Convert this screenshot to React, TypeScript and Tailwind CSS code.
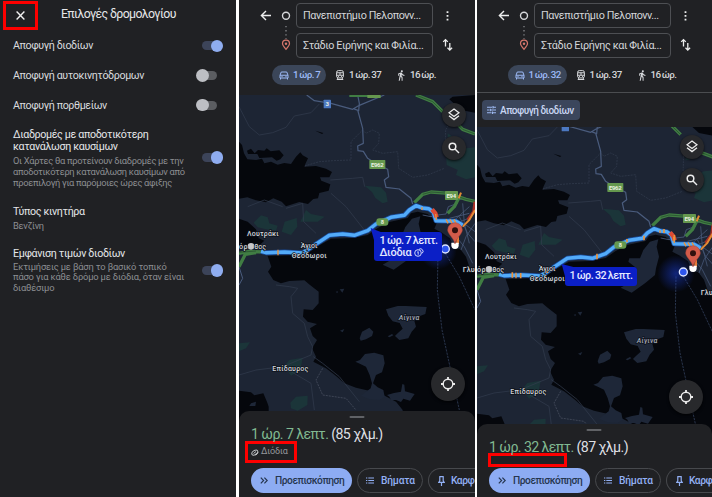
import type { ReactNode } from 'react';
import clsx from 'clsx';

const Toggle = ({ on = false }: { on?: boolean }) => (
  <div
    className={clsx(
      'flex h-[9px] w-[20px] shrink-0 items-center rounded-full',
      on ? 'mr-[14px] justify-end bg-[#3c4459]' : 'mr-[19px] justify-start bg-[#5b5d61]',
    )}
  >
    <div className={clsx('h-[12.5px] w-[12.5px] shrink-0 rounded-full', on ? '-mr-px bg-[#8fadf0]' : '-ml-px bg-[#bdbfc4]')} />
  </div>
);

const OptionRow = ({ title, on }: { title: string; on: boolean }) => (
  <div className="flex h-[29.7px] items-center justify-between pl-[13px]">
    <span className="pt-px text-[10.7px] tracking-[-0.4px] text-[#d9dbde]">{title}</span>
    <Toggle on={on} />
  </div>
);

const Lines = ({ lines }: { lines: string[] }) => (
  <>
    {lines.map((line) => (
      <span key={line} className="block whitespace-nowrap">
        {line}
      </span>
    ))}
  </>
);

const OptionsPanel = () => (
  <section className="h-full w-[236px] shrink-0 overflow-hidden bg-[#202124]">
    <div className="flex h-[31px] items-start">
      <div className="ml-[3px] mt-px flex h-[29px] w-[35px] items-center justify-center border-3 border-[#fe0000]">
        <svg className="h-[9px] w-[9px]" viewBox="0 0 9 9" stroke="#f1f1f1" strokeWidth="1.4">
          <path d="M.6.6 8.4 8.4M8.4.6.6 8.4" />
        </svg>
      </div>
      <h1 className="ml-[23px] mt-[5px] whitespace-nowrap text-[12.3px] leading-[18px] tracking-[-0.62px] text-[#e6e7e9]">Επιλογές δρομολογίου</h1>
    </div>

    <OptionRow title="Αποφυγή διοδίων" on />
    <OptionRow title="Αποφυγή αυτοκινητόδρομων" on={false} />
    <OptionRow title="Αποφυγή πορθμείων" on={false} />

    <div className="mt-[7.5px] flex h-[60px] items-center justify-between pl-[13px]">
      <div className="pt-[2px]">
        <h2 className="text-[10.7px] leading-[12.3px] tracking-[-0.36px] text-[#e4e6e9]">
          <Lines lines={['Διαδρομές με αποδοτικότερη', 'κατανάλωση καυσίμων']} />
        </h2>
        <p className="mt-[2.5px] text-[9.3px] leading-[10.8px] tracking-[-0.3px] text-[#8c8e92]">
          <Lines lines={['Οι Χάρτες θα προτείνουν διαδρομές με την', 'αποδοτικότερη κατανάλωση καυσίμων από', 'προεπιλογή για παρόμοιες ώρες άφιξης']} />
        </p>
      </div>
      <Toggle on />
    </div>

    <div className="mt-[17px] pl-[13px]">
      <h2 className="text-[10.7px] leading-[13px] tracking-[-0.36px] text-[#e4e6e9]">Τύπος κινητήρα</h2>
      <p className="mt-[2px] text-[9.3px] leading-[11px] tracking-[-0.3px] text-[#8c8e92]">Βενζίνη</p>
    </div>

    <div className="mt-[16px] flex items-center justify-between pl-[13px]">
      <div>
        <h2 className="text-[10.7px] leading-[13px] tracking-[-0.36px] text-[#e4e6e9]">Εμφάνιση τιμών διοδίων</h2>
        <p className="mt-[2px] text-[9.3px] leading-[10.8px] tracking-[-0.15px] text-[#8c8e92]">
          <Lines lines={['Εκτιμήσεις με βάση το βασικό τοπικό', 'πάσο για κάθε δρόμο με διόδια, όταν είναι', 'διαθέσιμο']} />
        </p>
      </div>
      <Toggle on />
    </div>
  </section>
);

const CarIcon = () => (
  <svg className="h-[9px] w-[10px] shrink-0" viewBox="0 0 20 18" fill="none" stroke="currentColor" strokeWidth="2">
    <path d="M2 8.5 4.5 2h11L18 8.5V14H2ZM2 8.5h16M3 14v3M17 14v3" />
    <path d="M5 11.3h2M13 11.3h2" strokeWidth="2.4" />
  </svg>
);

const TrainIcon = () => (
  <svg className="h-[10px] w-[8px] shrink-0" viewBox="0 0 16 20" fill="none" stroke="currentColor" strokeWidth="2">
    <rect x="1.2" y="1.2" width="13.6" height="14.6" rx="3.5" />
    <path d="M1.5 5.5h13M1.5 10.5h13M8 5.5v5M4 16l-2 3h12l-2-3" />
    <path d="M4 13.2h2M10 13.2h2" />
  </svg>
);

const WalkIcon = () => (
  <svg className="h-[11px] w-[8px] shrink-0" viewBox="4.5 1 14.5 22.5" fill="currentColor">
    <path d="M13.5 5.5c1.1 0 2-.9 2-2s-.9-2-2-2-2 .9-2 2 .9 2 2 2zM9.8 8.9 7 23h2.1l1.8-8 2.1 2v6h2v-7.5l-2.1-2 .6-3C14.8 12 16.8 13 19 13v-2c-1.9 0-3.5-1-4.3-2.4l-1-1.6c-.4-.6-1-1-1.7-1-.3 0-.5.1-.8.1L6 8.3V13h2V9.6l1.8-.7" />
  </svg>
);

const Field = ({ text }: { text: string }) => (
  <div className="flex h-[25px] w-[137px] items-center rounded-[4px] border border-[#4d4f53] pl-[6px] pt-px">
    <span className="whitespace-nowrap text-[10.8px] tracking-[-0.42px] text-[#d3d5d8]">{text}</span>
  </div>
);

const RouteHeader = ({ drive, wide = false }: { drive: string; wide?: boolean }) => (
  <header className="h-[95px] shrink-0">
    <div className="flex pt-[3px]">
      <div className="flex w-[57px] shrink-0">
        <svg className="h-[55px] w-[57px]" viewBox="0 0 57 55" fill="none" strokeWidth="1.4">
          <path d="M32 12.5H22.5M27 8l-4.6 4.5L27 17" stroke="#eceded" />
          <circle cx="47" cy="12.8" r="3.5" stroke="#d5d7da" />
          <path d="M47 23v13" stroke="#85878b" strokeWidth="1.3" strokeDasharray="1.3 2.8" />
          <path d="M47 46.3c-2.3-2.5-3.5-3.9-3.5-5.7a3.5 3.5 0 0 1 7 0c0 1.8-1.2 3.2-3.5 5.7Z" stroke="#d6766c" strokeWidth="1.2" />
          <circle cx="47" cy="40.8" r="1.2" fill="#d6766c" />
        </svg>
      </div>
      <div className="flex flex-col gap-[5px]">
        <Field text="Πανεπιστήμιο Πελοπονν..." />
        <Field text="Στάδιο Ειρήνης και Φιλία..." />
      </div>
      <svg className="h-[55px] w-[28px] shrink-0" viewBox="194 0 28 55" fill="none" stroke="#eceded" strokeWidth="1.3">
        <path d="M208.5 8.3v1.8M208.5 12v1.8M208.5 15.7v1.8" strokeWidth="1.8" />
        <path d="M206.5 43.5v-6.8M204.2 38.9l2.3-2.3 2.3 2.3M210.8 40v7M208.5 44.8l2.3 2.3 2.3-2.3" />
      </svg>
    </div>
    <div
      className={clsx(
        'mt-[7px] flex h-[20px] items-center whitespace-nowrap text-[9.8px] font-medium tracking-[-0.5px] text-[#d5d7da] [word-spacing:-0.8px]',
        wide ? 'ml-[30.5px]' : 'ml-[33px]',
      )}
    >
      <div className={clsx('flex h-full items-center gap-[4px] rounded-full bg-[#3b4659] pl-[7px] text-[#9dbaf7]', wide ? 'w-[59px]' : 'w-[54px]')}>
        <CarIcon />
        <span>{drive}</span>
      </div>
      <div className="ml-[10px] flex w-[61px] items-center gap-[5px]">
        <TrainIcon />
        <span>1 ώρ. 37</span>
      </div>
      <div className="flex items-center gap-[5px]">
        <WalkIcon />
        <span>16 ώρ.</span>
      </div>
    </div>
  </header>
);

const ROUTE = 'M75 484 90 488 145 486 200 489 225 472 280 436 320 432 355 436 395 422 420 402 465 382 505 376 520 360 540 347 560 354 578 356 592 366 600 392 660 394 680 405';

// Map units are a third of a pixel; `top` chooses which slice of the map is shown
const MapView = ({ top, height, tolls }: { top: number; height: number; tolls: boolean }) => (
  <svg
    className="block w-full shrink-0"
    height={height}
    viewBox={`9 ${top} 708 ${height * 3}`}
    preserveAspectRatio="xMinYMin slice"
    fontFamily="Roboto, 'Open Sans', sans-serif"
  >
    <defs>
      <radialGradient id={tolls ? 'glowA' : 'glowB'}>
        <stop offset="0" stopColor="#1d43e8" stopOpacity=".5" />
        <stop offset="1" stopColor="#1d43e8" stopOpacity="0" />
      </radialGradient>
    </defs>
    <rect x="0" y="0" width="720" height="1080" fill="#1d2534" />

    {/* sea */}
    <g fill="#05070c">
      <path d="M9 155 18 165 24 190 34 208 60 210 78 206 85 220 105 215 125 224 145 219 165 222 180 200 193 187 200 196 216 205 208 222 206 230 240 228 270 236 288 246 280 262 252 262 256 272 283 283 278 302 250 309 246 325 232 327 216 342 190 336 150 349 137 335 112 325 90 337 60 331 34 322 9 326Z" />
      <path d="M33 182 45 176 56 190 66 180 85 182 92 175 104 184 130 181 143 196 133 208 122 212 108 202 70 204 64 192 36 192Z" />
      <path d="M9 386 35 395 60 418 68 445 85 452 70 466 9 466Z" />
      <path d="M95 498 106 530 96 545 112 570 135 580 160 573 205 571 222 585 248 605 248 640 230 660 203 658 201 680 215 695 243 702 222 715 230 738 243 750 228 775 240 800 232 815 270 835 300 858 325 880 360 893 432 910 480 935 500 960 500 1080 717 1080 717 545 700 530 690 500 673 478 655 474 642 445 618 428 595 416 604 395 590 385 575 372 545 365 525 370 515 384 460 396 425 414 395 435 350 444 285 446 240 472 210 494Z" />
      <path d="M9 452 45 457 55 466 82 460 94 488 98 500 98 1040 9 1040Z" transform="translate(0 450)" />
      <path d="M640 28 650 20 717 15 717 68 675 60Z" />
      <path d="M238 122 262 129 258 132Z" />
    </g>

    {/* islands and peninsulas */}
    <g fill="#1e2738">
      <path d="M553 379 548 401 555 431 546 466 543 486 513 511 473 539 440 524 463 511 488 491 488 466 463 446 466 436 498 436 508 411 528 386Z" />
      <path d="M450 658 485 648 510 648 572 651 568 672 552 678 535 692 540 710 527 725 517 745 490 750 477 738 485 730 500 716 491 699 470 694 457 677Z" />
      <path d="M371 745 378 725 400 713 412 725 408 738 390 748 374 752Z" />
      <path d="M455 739 468 732 472 736 460 742Z M311 598 325 596 319 608Z M299 605 306 604 304 610Z M312 722 325 717 320 727Z" />
      <path d="M358 815 372 810 387 792 415 788 442 796 446 820 438 847 420 855 411 880 425 892 442 900 446 920 430 930 400 928 375 917 404 895 408 880 401 855 390 830 373 822Z" />
      <path d="M453 915 474 909 495 905 499 882 505 884 507 904 536 912 522 932 502 926 495 936 480 930 465 930 460 920Z" />
      <path d="M45 940 60 935 58 948 40 948Z" />
    </g>

    {/* parks */}
    <g fill="#1b3539">
      <path d="M386 287 435 292 450 308 455 335 440 340 418 324 408 306Z" />
      <path d="M53 398 75 376 95 382 100 400 125 407 120 422 90 418 65 412Z" />
      <path d="M137 425 146 395 182 384 184 410 165 435Z" />
      <path d="M193 395 210 360 225 372 266 380 245 395Z" />
      <path d="M630 190 660 188 690 175 717 172 717 262 690 268 660 255 665 240 632 225Z" />
      <path d="M635 130 650 140 635 142Z" />
      <path d="M9 760 42 757 30 775 9 784Z" />
      <path d="M145 828 160 810 200 803 193 840 165 857Z" />
      <path d="M163 938 180 920 215 917 214 945 185 962 165 955Z" />
    </g>

    {/* borders and minor roads */}
    <g fill="none" stroke="#323b4d" strokeWidth="2.2">
      <path d="M9 50 40 110 70 135 110 128 150 112 175 78 225 68 250 42" />
      <path d="M206 228 250 215 290 212 345 210 345 155 380 120 390 130 410 120 430 130 428 160 410 180 440 190 485 185 488 235 530 262 575 255 625 235" strokeDasharray="6 3" />
      <path d="M627 190 629 120 640 100" strokeDasharray="5 3" />
      <path d="M283 270 350 265 380 262 386 290M285 310 330 350 385 420M35 350 85 330 140 350M150 355 200 340 203 395 240 430" />
      <path d="M120 585 160 590 185 595 165 620 170 670 205 700 215 740 230 770 225 795 140 830 60 840 9 855M232 800 260 820 310 860 370 935M140 830 225 880 235 960" />
      <path d="M260 835 240 870 260 915 330 925 360 960" strokeDasharray="6 3" stroke="#4a5161" />
    </g>
    <g fill="none" stroke="#4a5c7d" strokeWidth="3.6" strokeLinejoin="round">
      <path d="M212 15 235 32 285 40 350 58 370 46 445 15M365 15 370 40 368 62 352 56M365 60 380 115 382 160 365 168 366 182 382 184 395 205 418 220 455 238 458 260 445 270 450 292 490 297 525 325 530 342" />
      <path d="M545 352 515 362M560 375 585 380 605 375 630 372 637 350 665 340M660 330 690 325M640 385 700 370" strokeWidth="2.5" />
      <path d="M650 395 700 350M660 400 705 382M670 380 695 430 717 455M680 340 685 400 700 460M650 420 690 405 717 425M675 480 690 440 717 400M640 410 660 440 685 470 710 520" strokeWidth="2.2" />
      <path d="M9 585 20 565 9 530" strokeWidth="3" />
    </g>
    <g fill="none" stroke="#354563" strokeWidth="2.2" strokeDasharray="7 3">
      <path d="M606 490 604 600 618 720 670 960" />
      <path d="M628 490 670 560 717 660" />
    </g>

    {/* motorways */}
    <g fill="none" stroke="#407d43" strokeWidth="10" strokeLinejoin="round">
      <path d="M535 338 560 313 585 306 640 310 690 328 717 334M635 370 655 350 668 325" />
      <path d="M340 16h70M540 15 590 35 620 65M660 98 680 118 717 132" />
      <path d="M9 490 40 484 80 486M9 530 28 493 60 488" />
    </g>
    <g fill="none" stroke="#1b3425" strokeWidth="1.5">
      <path d="M560 313 585 306 640 310 690 328 717 334M9 487 60 483M540 15 590 35 620 65M660 98 680 118 717 132" />
    </g>
    <path d="M717 335 713 365 695 390" fill="none" stroke="#a72f27" strokeWidth="9" />
    <path d="M717 360 700 390 680 410M668 325 675 308" fill="none" stroke="#e38a34" strokeWidth="6" />

    {/* route */}
    <path d={ROUTE} fill="none" stroke="#174a9a" strokeWidth="15" strokeLinejoin="round" />
    <path d={ROUTE} fill="none" stroke="#53abf9" strokeWidth="10.5" strokeLinejoin="round" />
    <path d="M588 358 598 370 602 382" fill="none" stroke="#db4b35" strokeWidth="13" />
    <path d="M599 372 601 390M126 479v17M558 352v8M630 388l6 12M642 388l6 12M654 388l6 12" fill="none" stroke="#ec9339" strokeWidth="4" />
    {!tolls && (
      <path d="M115 478v16M140 480v16M220 468v12M369 422v17M510 368v14M459 378v10M570 348v12M601 366v18" fill="none" stroke="#ec9339" strokeWidth="5" />
    )}

    {/* road shields */}
    <g fill="#e9f0e0" textAnchor="middle" fontWeight="700">
      <rect x="263" y="29" width="22" height="26" rx="2" fill="#4c78c0" />
      {tolls && (
        <text x="274" y="49" fontSize="18">
          3
        </text>
      )}
      <rect x="400" y="210" width="48" height="27" rx="2" fill="#65984e" />
      <text x="424" y="230" fontSize="18" textLength="38">E962</text>
      <rect x="627" y="303" width="39" height="27" rx="2" fill="#65984e" />
      <text x="646" y="323" fontSize="18" textLength="29">E94</text>
      <rect x="421" y="385" width="36" height="22" rx="9" fill="#65984e" />
      <text x="439" y="402" fontSize="17">8</text>
      <rect x="394" y="4" width="40" height="20" fill="#65984e" />
    </g>

    {/* place names */}
    <circle cx="45" cy="469" r="10" fill="#c6c7ca" />
    <g fill="#d4d6da" stroke="#0e131c" strokeWidth="4" paintOrder="stroke" fontSize="21.5" fontWeight="500">
      <text x="33" y="439" textLength="95">Λουτράκι</text>
      <text x="9" y="477" textLength="26">όρ</text>
      <text x="55" y="477" textLength="35">θος</text>
      <text x="194" y="475" textLength="50">Άγιοι</text>
      <text x="167" y="504" textLength="105">Θεόδωροι</text>
      <text x="109" y="842" textLength="108">Επίδαυρος</text>
      <text x="680" y="547" fontSize="22" textLength="36">Γλυ</text>
      <text x="488" y="689" fontStyle="italic" fontSize="21" fill="#a9afbd" textLength="62">Αίγινα</text>
    </g>

    {/* current position and destination */}
    <circle cx="606" cy="482" r="56" fill={tolls ? 'url(#glowA)' : 'url(#glowB)'} />
    <circle cx="628" cy="477" r="12" fill="#2e55ee" stroke="#dfe6ff" strokeWidth="4" />
    <path d="M665 440v22" stroke="#e77b38" strokeWidth="8" />
    <path d="M646 458h22v8a11 11 0 0 1-22 0Z" fill="#fff" />
    <path d="M657 462c-2-16-22-30-22-42a22 22 0 0 1 44 0c0 12-20 26-22 42Z" fill="#d35b4a" stroke="#a9443a" strokeWidth="1.5" />
    <circle cx="657" cy="421" r="9" fill="#30100e" />

    {/* callout pointer */}
    {tolls ? <path d="M404 414 440 428 414 450Z" fill="#0b1fc6" /> : <path d="M263 453 310 465 273 490Z" fill="#0b1fc6" />}
  </svg>
);

const RoundButton = ({ className, children }: { className: string; children: ReactNode }) => (
  <div className={clsx('absolute flex items-center justify-center rounded-full bg-[#28292c] text-[#ececec] shadow-sm shadow-black/60', className)}>
    {children}
  </div>
);

const MapControls = ({ locate }: { locate: string }) => (
  <>
    <RoundButton className="left-[202.5px] top-[7.5px] h-[24px] w-[24px]">
      <svg className="h-[13px] w-[12px]" viewBox="0 0 12 13" fill="none" stroke="currentColor" strokeWidth="1.3">
        <path d="M6 1 11 4.7 6 8.5 1 4.7ZM1 7.8 6 11.6 11 7.8" />
      </svg>
    </RoundButton>
    <RoundButton className="left-[202.5px] top-[40.5px] h-[24px] w-[24px]">
      <svg className="h-[12px] w-[12px]" viewBox="0 0 12 12" fill="none" stroke="currentColor" strokeWidth="1.5">
        <circle cx="4.5" cy="4.5" r="3.3" />
        <path d="m7 7 4 4" />
      </svg>
    </RoundButton>
    <RoundButton className={clsx('left-[191.7px] h-[34px] w-[34px]', locate)}>
      <svg className="h-[14px] w-[14px]" viewBox="0 0 14 14" fill="none" stroke="currentColor" strokeWidth="1.4">
        <circle cx="7" cy="7" r="4.8" />
        <path d="M7 0v2.5M7 11.5V14M0 7h2.5M11.5 7H14" strokeWidth="1.8" />
      </svg>
    </RoundButton>
  </>
);

const ActionBar = () => (
  <div className="absolute left-[12px] top-[468px] flex h-[25px] gap-[5px] whitespace-nowrap text-[10.2px] font-medium tracking-[-0.45px] text-[#92b0f4]">
    <div className="flex w-[101px] shrink-0 items-center gap-[7px] rounded-full bg-[#8dacf3] pl-[9px] text-[#26364f]">
      <svg className="h-[7px] w-[8px] shrink-0" viewBox="0 0 8 7" fill="none" stroke="currentColor" strokeWidth="1.2">
        <path d="m.8.7 2.8 2.8L.8 6.3M4.4.7l2.8 2.8-2.8 2.8" />
      </svg>
      <span>Προεπισκόπηση</span>
    </div>
    <div className="flex w-[66px] shrink-0 items-center gap-[7px] rounded-full border border-[#47494d] pl-[8px]">
      <svg className="h-[7px] w-[8px] shrink-0" viewBox="0 0 8 7" stroke="currentColor" strokeWidth="1.2">
        <path d="M0 1h1.3M2.3 1H8M0 3.5h1.3M2.3 3.5H8M0 6h1.3M2.3 6H8" />
      </svg>
      <span className="tracking-[-0.2px]">Βήματα</span>
    </div>
    <div className="flex w-[70px] shrink-0 items-center gap-[6px] rounded-l-full border border-r-0 border-[#47494d] pl-[9px]">
      <svg className="h-[10px] w-[7px] shrink-0" viewBox="0 0 7 10" fill="none" stroke="currentColor" strokeWidth="1.2">
        <path d="M1.3.6h4.4M1.8.6v4.2L.8 6.4h5.4l-1-1.6V.6M3.5 6.4V10" />
      </svg>
      <span>Καρφ</span>
    </div>
  </div>
);

const SheetHead = ({ time, distance }: { time: string; distance: string }) => (
  <>
    <div className="mx-auto h-[2px] w-[15px] -translate-x-[0.5px] rounded-full bg-[#606266]" />
    <div className="mt-[6px] whitespace-nowrap pl-[12px] text-[14.2px] leading-[20px] tracking-[-0.6px] text-[#dddfe2]">
      <span className="text-[#81b991]">{time}</span> {distance}
    </div>
  </>
);

const TollRoutePanel = () => (
  <section className="relative ml-[3px] flex h-full w-[236px] shrink-0 flex-col overflow-hidden bg-[#202124]">
    <RouteHeader drive="1 ώρ. 7" />
    <div className="relative h-[316px] shrink-0">
      <MapView top={15} height={332} tolls />
      <MapControls locate="top-[272px]" />
      <div className="absolute left-[135px] top-[136.5px] h-[29.5px] w-[68px] whitespace-nowrap rounded-[3px] bg-[#0b1fc6] pl-[5.5px] pt-[3px] text-[11px] font-medium leading-[12px] tracking-[-0.55px] text-[#e4e8ff] [word-spacing:-0.5px]">
        <div>1 ώρ. 7 λεπτ.</div>
        <div className="flex items-center gap-[3px] tracking-[-0.3px]">
          Διόδια
          <svg className="h-[9px] w-[10px]" viewBox="0 0 10 9" fill="none" stroke="currentColor" strokeWidth=".9">
            <circle cx="4" cy="5" r="3.3" />
            <path d="M3.3 4.2 4.2 3.6V6.7M5 1.3A2.5 2.5 0 1 1 8 5.4" />
          </svg>
        </div>
      </div>
    </div>
    <div className="relative h-[86px] shrink-0 rounded-t-[10px] bg-[#202124] pt-[5px]">
      <SheetHead time="1 ώρ. 7 λεπτ." distance="(85 χλμ.)" />
      <div className="-mt-[3px] ml-[6px] flex h-[22px] w-[52px] items-center gap-[2px] border-3 border-[#fe0000] pl-[3px] text-[9px] tracking-[-0.1px] text-[#96989c]">
        <svg className="h-[7px] w-[8px] shrink-0" viewBox="0 0 8 7" fill="none" stroke="#c0c2c5">
          <ellipse cx="3.8" cy="3.6" rx="3.3" ry="2" transform="rotate(-35 3.8 3.6)" />
          <path d="m2.5 4.5 2.5-2M4.8 6.2 7.2 3.5" />
        </svg>
        <span>Διόδια</span>
      </div>
    </div>
    <ActionBar />
  </section>
);

const FreeRoutePanel = () => (
  <section className="relative ml-[2px] flex h-full w-[235px] shrink-0 flex-col overflow-hidden bg-[#202124]">
    <RouteHeader drive="1 ώρ. 32" wide />
    <div className="-mt-[3px] h-[35px] shrink-0 border-t border-[#4b4d50] pl-[5px] pt-[7px]">
      <div className="flex h-[20px] w-[98px] items-center gap-[4px] whitespace-nowrap rounded-[4px] bg-[#3b465c] pl-[5px] text-[10px] font-medium tracking-[-0.5px] text-[#c9d6f3]">
        <svg className="h-[8px] w-[9px] shrink-0" viewBox="0 0 9 8" stroke="#9db8ef" strokeWidth="1.1">
          <path d="M0 1.3h5M6.5 1.3H9M6 0v2.6M0 4h2.2M3.8 4H9M3.3 2.7v2.6M0 6.7h4.5M6 6.7h3M5.5 5.4V8" />
        </svg>
        Αποφυγή διοδίων
      </div>
    </div>
    <div className="relative h-[297px] shrink-0">
      <MapView top={42} height={312} tolls={false} />
      <MapControls locate="top-[253px]" />
      <div className="absolute left-[88px] top-[140px] flex h-[18.5px] w-[72px] items-center justify-center whitespace-nowrap rounded-[3px] bg-[#0b1fc6] text-[10.8px] font-medium tracking-[-0.5px] text-[#e4e8ff] [word-spacing:-0.5px]">
        1 ώρ. 32 λεπτ.
      </div>
    </div>
    <div className="relative h-[73px] shrink-0 rounded-t-[10px] bg-[#202124] pt-[5px]">
      <SheetHead time="1 ώρ. 32 λεπτ." distance="(87 χλμ.)" />
      <div className="-mt-[4px] ml-[11px] h-[14px] w-[79px] border-3 border-[#fe0000]" />
    </div>
    <ActionBar />
  </section>
);

const App = () => (
  <main className="flex h-[497px] w-[712px] overflow-hidden bg-white font-['Roboto','Open_Sans',sans-serif]">
    <OptionsPanel />
    <TollRoutePanel />
    <FreeRoutePanel />
  </main>
);

export default App;
